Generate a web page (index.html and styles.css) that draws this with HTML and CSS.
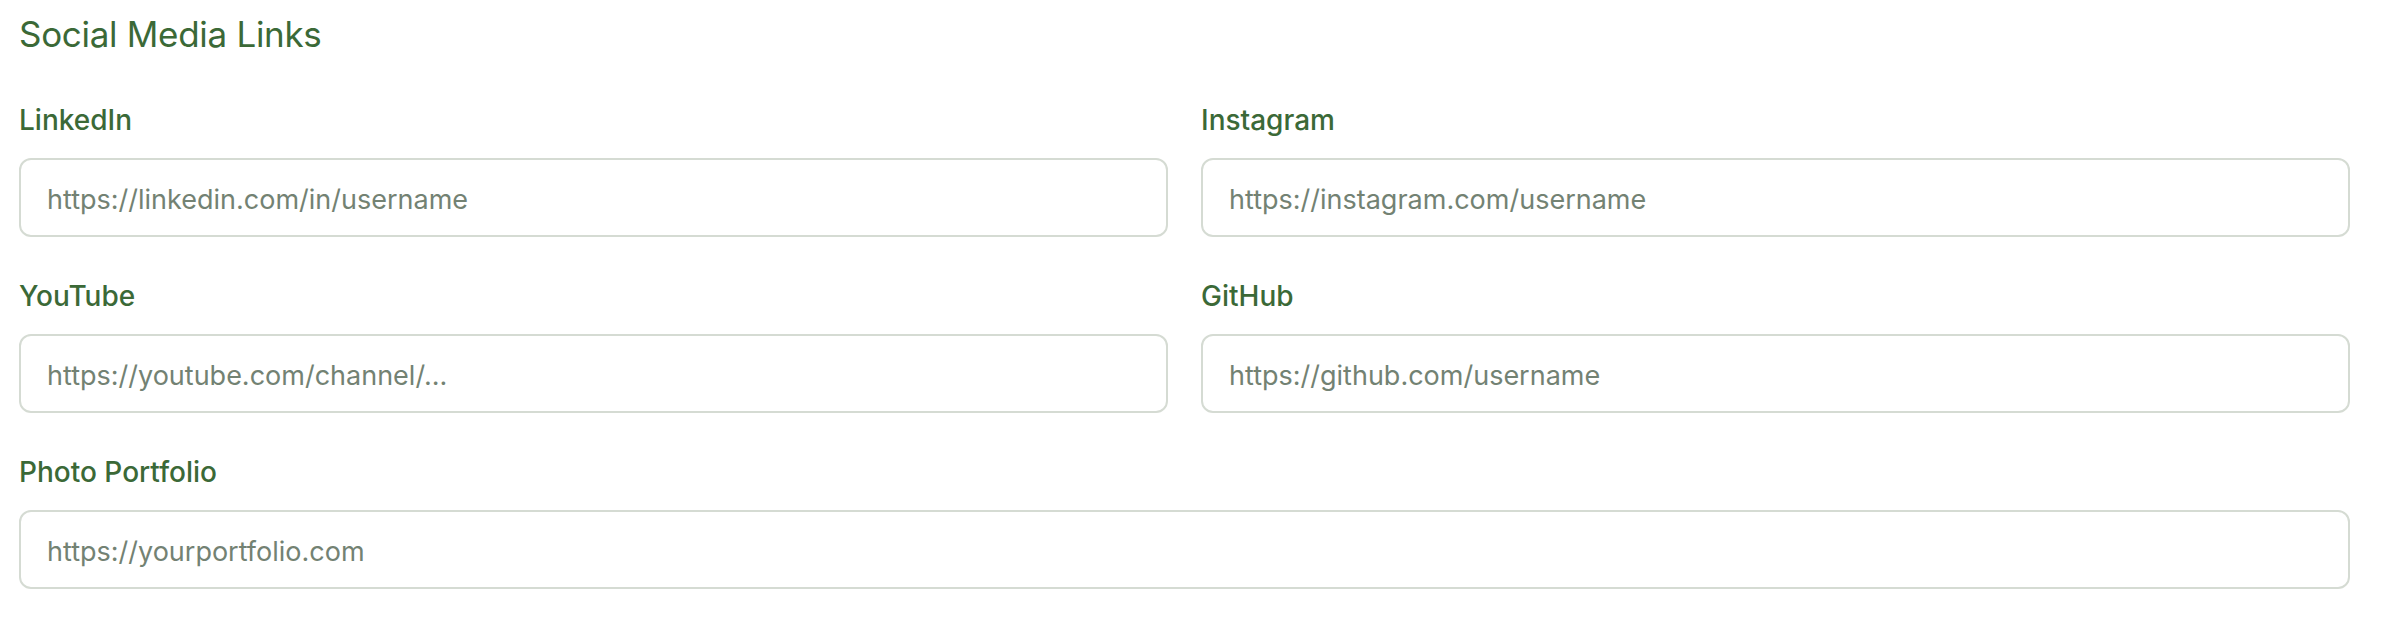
FILE: index.html
```html
<!DOCTYPE html>
<html lang="en">
<head>
<meta charset="utf-8">
<title>Social Media Links</title>
<link rel="stylesheet" href="styles.css">
</head>
<body>
<section class="section">
  <h2 class="section-title">Social Media Links</h2>
  <div class="field-grid">
    <div class="field">
      <label class="field-label" for="linkedin">LinkedIn</label>
      <input class="field-input" id="linkedin" type="url" placeholder="https://linkedin.com/in/username">
    </div>
    <div class="field">
      <label class="field-label" for="instagram">Instagram</label>
      <input class="field-input" id="instagram" type="url" placeholder="https://instagram.com/username">
    </div>
    <div class="field">
      <label class="field-label" for="youtube">YouTube</label>
      <input class="field-input" id="youtube" type="url" placeholder="https://youtube.com/channel/...">
    </div>
    <div class="field">
      <label class="field-label" for="github">GitHub</label>
      <input class="field-input" id="github" type="url" placeholder="https://github.com/username">
    </div>
    <div class="field field-wide">
      <label class="field-label" for="portfolio">Photo Portfolio</label>
      <input class="field-input" id="portfolio" type="url" placeholder="https://yourportfolio.com">
    </div>
  </div>
</section>
</body>
</html>
```
FILE: styles.css
```css
html, body {
  margin: 0;
  background: #ffffff;
}
body {
  font-family: Inter, "Liberation Sans", sans-serif;
  padding: 13px 34px 0 19px;
}
.section-title {
  margin: 0 0 48px 0;
  font-size: 35px;
  line-height: 42px;
  font-weight: 400;
  letter-spacing: -0.3px;
  color: #3b6937;
}
.field-grid {
  display: grid;
  grid-template-columns: 1fr 1fr;
  column-gap: 33px;
  row-gap: 42px;
}
.field {
  display: flex;
  flex-direction: column;
  min-width: 0;
}
.field-wide {
  grid-column: 1 / -1;
}
.field-label {
  font-size: 28px;
  line-height: 34px;
  font-weight: 500;
  color: #3b6937;
  margin-bottom: 21px;
}
.field-input {
  box-sizing: border-box;
  height: 79px;
  width: 100%;
  padding: 4px 26px 0;
  border: 2px solid #d5dbd3;
  border-radius: 12px;
  background: #ffffff;
  font-family: Inter, "Liberation Sans", sans-serif;
  font-size: 27px;
  color: #2b3a2b;
  outline: none;
}
.field-input::placeholder {
  color: #738273;
  opacity: 1;
}
```
